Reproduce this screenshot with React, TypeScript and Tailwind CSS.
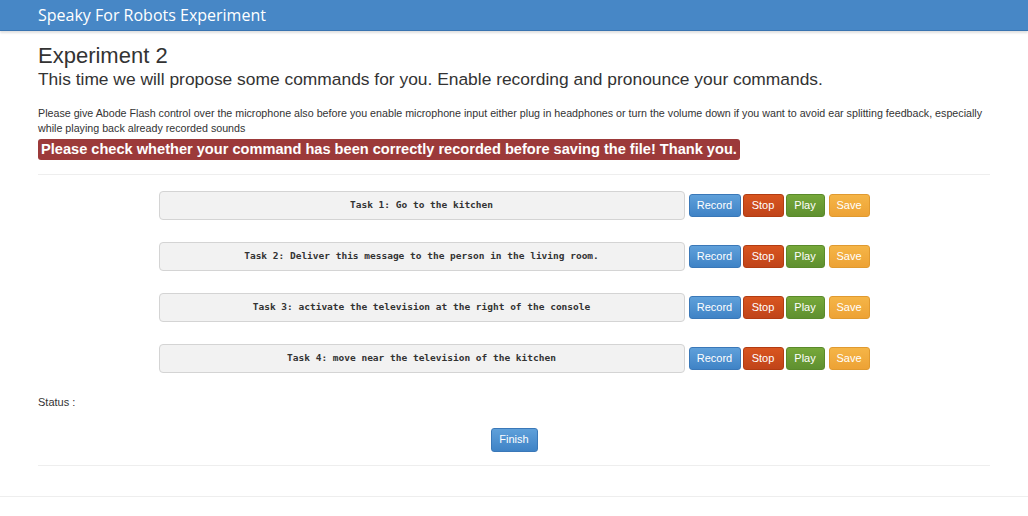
const tasks = [
  "Task 1: Go to the kitchen",
  "Task 2: Deliver this message to the person in the living room.",
  "Task 3: activate the television at the right of the console",
  "Task 4: move near the television of the kitchen",
];

function TaskRow({ label }: { label: string }) {
  return (
    <div className="flex items-center justify-center">
      <div className="w-[526px] h-[29px] flex items-center justify-center rounded-[4px] border border-[#d4d4d4] bg-[#f2f2f2] text-[9.5px] font-bold text-[#333] [font-family:'DejaVu_Sans_Mono',monospace]">
        {label}
      </div>
      <div className="flex ml-[4px] text-[11px] text-white">
        <button className="w-[52px] h-[23px] rounded-[3px] border border-[#3a78b8] bg-gradient-to-b from-[#5fa0da] to-[#3f83c6]">
          Record
        </button>
        <button className="ml-[2px] w-[41px] h-[23px] rounded-[3px] border border-[#b23c12] bg-gradient-to-b from-[#d9551f] to-[#c0441a]">
          Stop
        </button>
        <button className="ml-[2px] w-[39px] h-[23px] rounded-[3px] border border-[#5a8a2a] bg-gradient-to-b from-[#76a83a] to-[#5f9030]">
          Play
        </button>
        <button className="ml-[4px] w-[41px] h-[23px] rounded-[3px] border border-[#e09a30] bg-gradient-to-b from-[#f5b547] to-[#eda235]">
          Save
        </button>
      </div>
    </div>
  );
}

export default function App() {
  return (
    <div className="w-[1028px] h-[516px] bg-white text-[#333] [font-family:'Liberation_Sans',Arial,sans-serif] overflow-hidden">
      <div className="h-[31px] bg-[#4787c6] border-b border-[#3a74b0] shadow-[0_2px_2px_rgba(0,0,0,0.12)] flex items-center pl-[38px]">
        <span className="text-white text-[16px] [font-family:'Open_Sans',sans-serif]">
          Speaky For Robots Experiment
        </span>
      </div>

      <div className="mx-[38px] border-b border-[#eeeeee]">
        <h1 className="mt-[12px] text-[22px] leading-[26px] text-[#333]">Experiment 2</h1>
        <h2 className="text-[17.4px] leading-[20px] text-[#333]">
          This time we will propose some commands for you. Enable recording and pronounce your commands.
        </h2>
        <p className="mt-[17px] text-[10.7px] leading-[15px] text-[#333]">
          Please give Abode Flash control over the microphone also before you enable microphone input either plug in headphones or turn the volume down if you want to avoid ear splitting feedback, especially while playing back already recorded sounds
        </p>
        <div className="mt-[3px] inline-block rounded-[3px] bg-[#9c3a3a] px-[3px] h-[21px] leading-[21px] text-white text-[14.6px] font-bold">
          Please check whether your command has been correctly recorded before saving the file! Thank you.
        </div>
        <div className="mt-[13px] border-t border-[#eeeeee] pt-[16px] flex flex-col gap-[22px]">
          {tasks.map((t) => (
            <TaskRow key={t} label={t} />
          ))}
        </div>
        <div className="mt-[21px] text-[11px]">Status :</div>
        <div className="mt-[17px] flex justify-center">
          <button className="w-[47px] h-[24px] rounded-[3px] border border-[#3a78b8] bg-gradient-to-b from-[#5fa0da] to-[#3f83c6] text-white text-[11px]">
            Finish
          </button>
        </div>
        <div className="h-[13px]" />
      </div>
      <div className="mt-[30px] border-t border-[#eeeeee]" />
    </div>
  );
}
